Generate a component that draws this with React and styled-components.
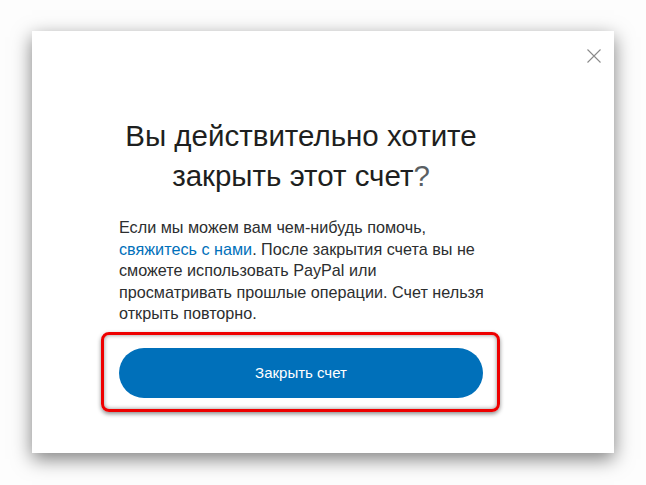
import React from "react";
import styled, { createGlobalStyle } from "styled-components";

const Global = createGlobalStyle`
  html, body { margin: 0; padding: 0; background: #fdfdfd; }
  body { font-family: "Liberation Sans", Arial, sans-serif; }
  * { box-sizing: border-box; }
`;

const Page = styled.div`
  width: 646px;
  height: 485px;
  padding: 31px 0 0 32px;
  overflow: hidden;
`;

const Panel = styled.div`
  position: relative;
  width: 582px;
  height: 422px;
  background: #fff;
  box-shadow: 0 6px 18px rgba(0, 0, 0, 0.5);
  padding: 85px 0 0 87px;
`;

const Close = styled.button`
  position: absolute;
  top: 18px;
  right: 13px;
  width: 14px;
  height: 14px;
  padding: 0;
  border: 0;
  background: none;
  cursor: pointer;
  display: block;
`;

const Column = styled.div`
  width: 364px;
  display: flex;
  flex-direction: column;
`;

const Title = styled.h1`
  margin: 0 -10px;
  font-size: 29.5px;
  line-height: 40px;
  font-weight: 400;
  color: #1e1f20;
  text-align: center;
`;

const Mark = styled.span`
  color: #5a5f63;
  font-weight: 300;
`;

const Body = styled.p`
  margin: 21px -30px 0 0;
  font-size: 16.2px;
  line-height: 21.5px;
  color: #2c2e2f;
  white-space: nowrap;
`;

const Link = styled.a`
  color: #0070ba;
  text-decoration: none;
`;

const Highlight = styled.div`
  margin: 7px 0 0 -18px;
  width: 399px;
  border: 3px solid #ee0000;
  border-radius: 8px;
  padding: 13px 14px 11px 15px;
  box-shadow: 0 2px 4px rgba(0, 0, 0, 0.45), inset 0 0 4px rgba(0, 0, 0, 0.45);
`;

const Button = styled.button`
  display: block;
  width: 364px;
  height: 50px;
  border: 0;
  border-radius: 25px;
  background: #0070ba;
  color: #fff;
  font-family: "Liberation Sans", Arial, sans-serif;
  font-size: 15px;
  cursor: pointer;
`;

export default function App() {
  return (
    <>
      <Global />
      <Page>
        <Panel>
          <Close aria-label="Закрыть">
            <svg width="14" height="14" viewBox="0 0 14 14">
              <path d="M0.5 0.5 L13.5 13.5 M13.5 0.5 L0.5 13.5" stroke="#8a8a8a" strokeWidth="1.1" fill="none" />
            </svg>
          </Close>
          <Column>
            <Title>
              Вы действительно хотите закрыть этот счет<Mark>?</Mark>
            </Title>
            <Body>
              Если мы можем вам чем-нибудь помочь,
              <br />
              <Link href="#">свяжитесь с нами</Link>. После закрытия счета вы не
              <br />
              сможете использовать PayPal или
              <br />
              просматривать прошлые операции. Счет нельзя
              <br />
              открыть повторно.
            </Body>
            <Highlight>
              <Button>Закрыть счет</Button>
            </Highlight>
          </Column>
        </Panel>
      </Page>
    </>
  );
}
